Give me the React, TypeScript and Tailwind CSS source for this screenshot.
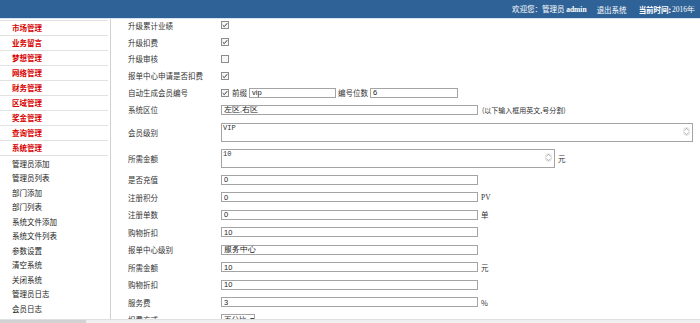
import React from 'react'

const redMenu = ['市场管理', '业务留言', '梦想管理', '网络管理', '财务管理', '区域管理', '奖金管理', '查询管理', '系统管理']
const blackMenu = ['管理员添加', '管理员列表', '部门添加', '部门列表', '系统文件添加', '系统文件列表', '参数设置', '清空系统', '关闭系统', '管理员日志', '会员日志', '商品添加']

function Check({ on }: { on: boolean }) {
  return (
    <span className="w-[8px] h-[8px] border border-[#8c8c8c] bg-[#f6f6f6] flex items-center justify-center">
      {on && (
        <svg viewBox="0 0 8 8" className="w-[6px] h-[6px]">
          <path d="M1 4.3 L3 6.2 L7 1.6" stroke="#333" strokeWidth="1.3" fill="none" />
        </svg>
      )}
    </span>
  )
}

function Field({ value, w }: { value: string, w: string }) {
  return (
    <input
      readOnly
      value={value}
      className={`${w} h-[10px] border border-[#a4a4a4] bg-white px-[2px] text-[7.5px] leading-none text-[#222] outline-none font-['Liberation_Sans',sans-serif]`}
    />
  )
}

function Spin() {
  return (
    <svg viewBox="0 0 8 10" className="w-[7px] h-[9px] absolute right-[3px] top-[4px]">
      <path d="M1.5 4 L4 1.2 L6.5 4" stroke="#9a9a9a" strokeWidth="0.9" fill="none" />
      <path d="M1.5 6 L4 8.8 L6.5 6" stroke="#9a9a9a" strokeWidth="0.9" fill="none" />
      <rect x="0.5" y="0.5" width="7" height="9" rx="3.5" stroke="#c8c8c8" strokeWidth="0.6" fill="none" />
    </svg>
  )
}

function Area({ value, w }: { value: string, w: string }) {
  return (
    <div className={`relative ${w} h-[19px]`}>
      <textarea
        readOnly
        value={value}
        className="w-full h-full border border-[#a4a4a4] bg-white px-[1px] py-0 text-[7px] leading-[8px] text-[#333] resize-none outline-none overflow-hidden font-['Liberation_Mono',monospace]"
      />
      <Spin />
    </div>
  )
}

function Row({ label, h, children }: { label: string, h: string, children: React.ReactNode }) {
  return (
    <div className={`flex items-center ${h}`}>
      <div className="w-[93px] shrink-0">{label}</div>
      <div className="flex items-center gap-[2px] whitespace-nowrap">{children}</div>
    </div>
  )
}

function Unit({ children, serif }: { children: React.ReactNode, serif?: boolean }) {
  return <span className={`ml-[1px] ${serif ? "font-['Liberation_Serif',serif]" : ''}`}>{children}</span>
}

export default function App() {
  return (
    <div className="w-[700px] h-[323px] overflow-hidden bg-white flex flex-col text-[7.5px] text-[#333] font-['Noto_Sans_CJK_SC',sans-serif]">
      <header className="h-[19px] shrink-0 bg-[#2f6398] border-b border-[#d6e4f2] flex items-end pb-[3px] pl-[512px] text-white whitespace-nowrap">
        <span>欢迎您：管理员 <b className="font-['Liberation_Serif',serif]">admin</b></span>
        <span className="ml-[10px]">退出系统</span>
        <span className="ml-[12px] font-bold">当前时间:</span>
        <span className="ml-[1px] font-['Liberation_Serif',serif]">2016年</span>
      </header>

      <div className="flex h-[300px] overflow-hidden">
        <aside className="w-[111px] shrink-0 pr-[2px] border-r border-[#d0d0d0] pt-[1px]">
          <ul className="border-t border-[#e2e2e2]">
            {redMenu.map(m => (
              <li key={m} className="h-[15px] border-b border-[#e2e2e2] pl-[12px] flex items-center font-bold text-[#d80000]">{m}</li>
            ))}
          </ul>
          <ul>
            {blackMenu.map(m => (
              <li key={m} className="h-[14.5px] pl-[12px] flex items-center text-[#222]">{m}</li>
            ))}
          </ul>
        </aside>

        <main className="flex-1 pl-[17px] -mt-[2px] text-[#333]">
          <Row label="升级累计业绩" h="h-[16.8px]"><Check on /></Row>
          <Row label="升级扣费" h="h-[16.8px]"><Check on /></Row>
          <Row label="升级审核" h="h-[16.8px]"><Check on={false} /></Row>
          <Row label="报单中心申请是否扣费" h="h-[16.8px]"><Check on /></Row>
          <Row label="自动生成会员编号" h="h-[16.8px]">
            <Check on />
            <span className="ml-[1px]">前缀</span>
            <Field value="vip" w="w-[87px]" />
            <span>编号位数</span>
            <Field value="6" w="w-[88px]" />
          </Row>
          <Row label="系统区位" h="h-[18px]">
            <Field value="左区,右区" w="w-[257px]" />
            <span className="ml-[2px] text-[7px]">(以下输入框用英文,号分割)</span>
          </Row>
          <Row label="会员级别" h="h-[27px]">
            <Area value="VIP" w="w-[472px]" />
          </Row>
          <Row label="所需金额" h="h-[25px]">
            <Area value="10" w="w-[334px]" />
            <Unit>元</Unit>
          </Row>
          <Row label="是否充值" h="h-[17.5px]"><Field value="0" w="w-[257px]" /></Row>
          <Row label="注册积分" h="h-[17.5px]"><Field value="0" w="w-[257px]" /><Unit serif>PV</Unit></Row>
          <Row label="注册单数" h="h-[17.5px]"><Field value="0" w="w-[257px]" /><Unit>单</Unit></Row>
          <Row label="购物折扣" h="h-[17.5px]"><Field value="10" w="w-[257px]" /></Row>
          <Row label="报单中心级别" h="h-[17.5px]"><Field value="服务中心" w="w-[257px]" /></Row>
          <Row label="所需金额" h="h-[17.5px]"><Field value="10" w="w-[257px]" /><Unit>元</Unit></Row>
          <Row label="购物折扣" h="h-[17.5px]"><Field value="10" w="w-[257px]" /></Row>
          <Row label="服务费" h="h-[17.5px]"><Field value="3" w="w-[257px]" /><Unit>%</Unit></Row>
          <Row label="扣费方式" h="h-[17.5px]">
            <span className="w-[34px] h-[11px] border border-[#a4a4a4] flex items-center pl-[2px] gap-[3px]">
              百分比
              <svg viewBox="0 0 6 4" className="w-[5px] h-[3px]"><path d="M0 0 L6 0 L3 4 Z" fill="#444" /></svg>
            </span>
          </Row>
        </main>
      </div>

      <div className="h-[4px] shrink-0 bg-[#efefef] border-t border-[#e0e0e0]">
        <div className="w-[86px] h-full bg-[#d2d2d2]" />
      </div>
    </div>
  )
}
